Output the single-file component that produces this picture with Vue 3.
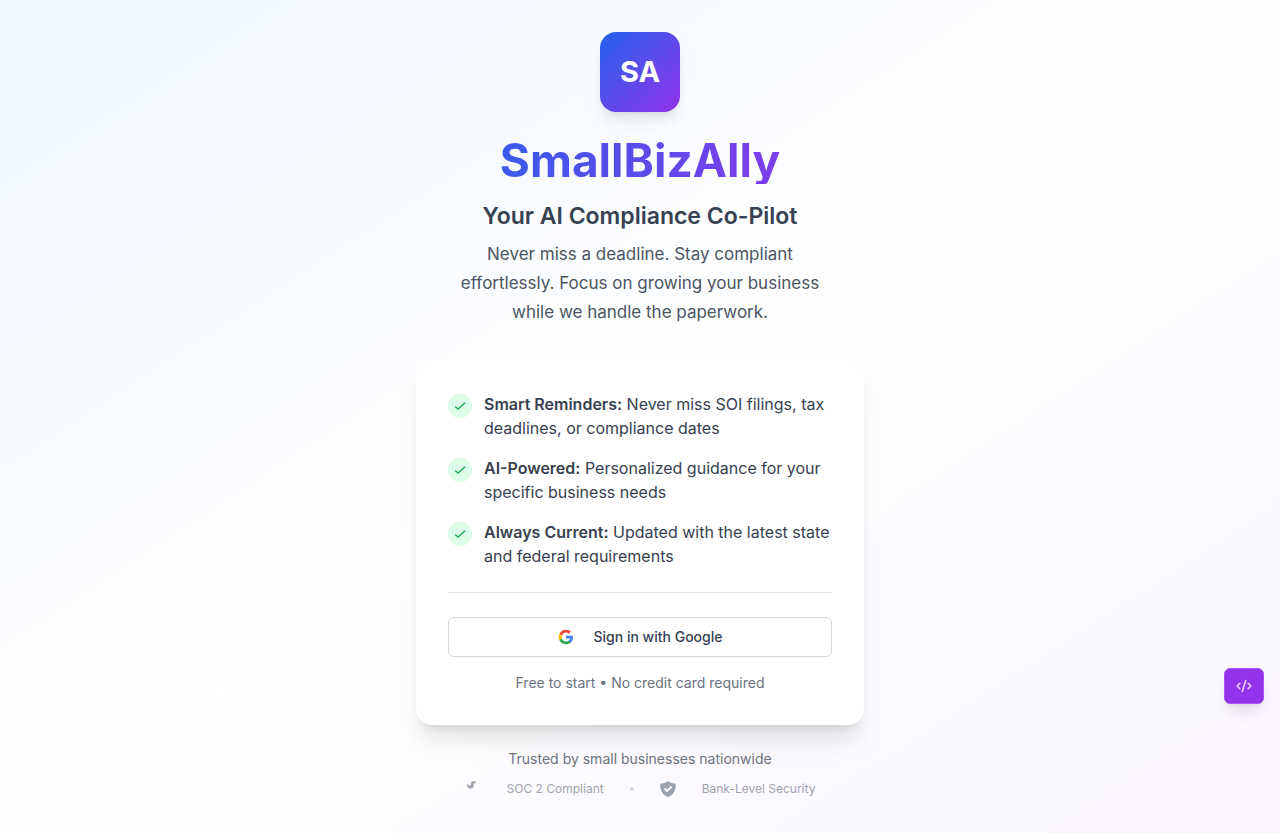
<script setup>
const features = [
  { title: 'Smart Reminders:', text: 'Never miss SOI filings, tax deadlines, or compliance dates' },
  { title: 'AI-Powered:', text: 'Personalized guidance for your specific business needs' },
  { title: 'Always Current:', text: 'Updated with the latest state and federal requirements' },
]
</script>

<template>
  <main class="page">
    <div class="column">
      <header class="hero">
        <div class="logo">SA</div>
        <h1>SmallBizAlly</h1>
        <h2>Your AI Compliance Co-Pilot</h2>
        <p class="lead">
          Never miss a deadline. Stay compliant effortlessly. Focus on growing your business while we handle the paperwork.
        </p>
      </header>

      <section class="card">
        <ul class="features">
          <li v-for="f in features" :key="f.title">
            <span class="tick">
              <svg width="16" height="16" viewBox="0 0 16 16" aria-hidden="true">
                <path d="M3.2 8.6 6.1 11.2 13 4.8" fill="none" stroke="currentColor" stroke-width="1.3" />
              </svg>
            </span>
            <p><strong>{{ f.title }}</strong> {{ f.text }}</p>
          </li>
        </ul>
        <div class="signin">
          <button type="button" class="google">
            <svg width="16" height="16" viewBox="0 0 24 24" aria-hidden="true">
              <path fill="#4285F4" d="M22.56 12.25c0-.78-.07-1.53-.2-2.25H12v4.26h5.92c-.26 1.37-1.04 2.53-2.21 3.31v2.77h3.57c2.08-1.92 3.28-4.74 3.28-8.09z" />
              <path fill="#34A853" d="M12 23c2.97 0 5.46-.98 7.28-2.66l-3.57-2.77c-.98.66-2.23 1.06-3.71 1.06-2.86 0-5.29-1.93-6.16-4.53H2.18v2.84C3.99 20.53 7.7 23 12 23z" />
              <path fill="#FBBC05" d="M5.84 14.09c-.22-.66-.35-1.36-.35-2.09s.13-1.43.35-2.09V7.07H2.18C1.43 8.55 1 10.22 1 12s.43 3.45 1.18 4.93l3.66-2.84z" />
              <path fill="#EA4335" d="M12 5.38c1.62 0 3.06.56 4.21 1.64l3.15-3.15C17.45 2.09 14.97 1 12 1 7.7 1 3.99 3.47 2.18 7.07l3.66 2.84c.87-2.6 3.3-4.53 6.16-4.53z" />
            </svg>
            <span>Sign in with Google</span>
          </button>
          <p class="note">Free to start • No credit card required</p>
        </div>
      </section>

      <footer class="trust">
        <p>Trusted by small businesses nationwide</p>
        <div class="badges">
          <svg width="16" height="16" viewBox="0 0 16 16" fill="currentColor" aria-hidden="true">
            <path d="M1.400 3.600 2.600 3.200 3.400 4.300 5.300 4.400 6.400 3.500 5.900 2.300 6.600 .600 10.600 .300 10.400 2.300 8.300 2.800 8.700 4.200 8.200 6.500 6.500 7.500 4 7.400 2.600 6.200 2.700 5.200z" />
          </svg>
          <span>SOC 2 Compliant</span>
          <i class="dot"></i>
          <svg width="16" height="16" viewBox="0 0 16 16" fill="currentColor" aria-hidden="true">
            <path fill-rule="evenodd" d="M8 0c-2 1.700-4.700 2.600-7.700 2.700C.1 8.500 1.600 13.700 8 16c6.400-2.300 7.900-7.500 7.700-13.300C12.700 2.600 10 1.700 8 0zm3.700 6.700-4 4a1 1 0 0 1-1.400 0l-2-2a1 1 0 0 1 1.400-1.400L7 8.600l3.300-3.300a1 1 0 0 1 1.400 1.400z" />
          </svg>
          <span>Bank-Level Security</span>
        </div>
      </footer>
    </div>

    <button type="button" class="code" aria-label="Code">
      <svg width="16" height="16" viewBox="0 0 16 16" fill="none" stroke="currentColor" stroke-width="1.700" stroke-linecap="round" stroke-linejoin="round" aria-hidden="true">
        <path d="M3.800 5.400 1.200 8l2.600 2.600M12.200 5.400 14.800 8l-2.600 2.600M9.700 2.600 6.300 13.400" />
      </svg>
    </button>
  </main>
</template>

<style>
body {
  margin: 0;
}
</style>

<style scoped>
.page {
  box-sizing: border-box;
  min-height: 100vh;
  padding: 32px 16px;
  display: flex;
  justify-content: center;
  background: linear-gradient(to bottom right, #eff6ff, #ffffff, #faf5ff);
  font-family: Inter, "Liberation Sans", sans-serif;
  font-size: 16px;
  line-height: 24px;
  color: #374151;
}
h1, h2, p, ul {
  margin: 0;
  padding: 0;
}
svg {
  display: block;
  flex-shrink: 0;
}
.column {
  width: 100%;
  max-width: 448px;
}
.hero {
  display: flex;
  flex-direction: column;
  align-items: center;
  text-align: center;
}
.logo {
  width: 80px;
  height: 80px;
  display: flex;
  align-items: center;
  justify-content: center;
  border-radius: 16px;
  background: linear-gradient(to bottom right, #2563eb, #9333ea);
  box-shadow: 0 10px 15px -3px rgba(0, 0, 0, 0.1), 0 4px 6px -4px rgba(0, 0, 0, 0.1);
  color: #fff;
  font-size: 29px;
  font-weight: 700;
}
h1 {
  align-self: stretch;
  margin-top: 24px;
  font-size: 46px;
  line-height: 48px;
  font-weight: 700;
  background: linear-gradient(to right, #2563eb, #9333ea);
  background-clip: text;
  -webkit-background-clip: text;
  color: transparent;
}
h2 {
  margin-top: 16px;
  font-size: 23px;
  line-height: 32px;
  font-weight: 600;
}
.lead {
  max-width: 384px;
  margin-top: 8px;
  font-size: 17px;
  line-height: 29px;
  color: #4b5563;
}
.card {
  margin-top: 33px;
  padding: 32px;
  border-radius: 16px;
  background: #fff;
  box-shadow: 0 20px 25px -5px rgba(0, 0, 0, 0.1), 0 8px 10px -6px rgba(0, 0, 0, 0.1);
}
.features {
  display: grid;
  gap: 16px;
  list-style: none;
}
.features li {
  display: flex;
  gap: 12px;
}
.features strong {
  font-weight: 600;
}
.tick {
  flex: none;
  width: 24px;
  height: 24px;
  margin-top: 2px;
  display: flex;
  align-items: center;
  justify-content: center;
  border-radius: 50%;
  background: #dcfce7;
  color: #16a34a;
}
.signin {
  margin-top: 24px;
  padding-top: 24px;
  border-top: 1px solid #dbe1ea;
}
.google {
  width: 100%;
  height: 40px;
  display: flex;
  align-items: center;
  justify-content: center;
  gap: 20px;
  border: 1px solid #d1d5db;
  border-radius: 6px;
  background: #fff;
  color: #374151;
  font: 500 14px/20px Inter, "Liberation Sans", sans-serif;
}
.note {
  margin-top: 16px;
  text-align: center;
  font-size: 14px;
  line-height: 20px;
  color: #6b7280;
}
.trust {
  margin-top: 24px;
  text-align: center;
  font-size: 14px;
  line-height: 20px;
  color: #6b7280;
}
.badges {
  margin-top: 12px;
  display: flex;
  align-items: center;
  justify-content: center;
  gap: 26px;
  font-size: 12px;
  line-height: 16px;
  color: #9ca3af;
}
.dot {
  width: 4px;
  height: 4px;
  border-radius: 50%;
  background: #d1d5db;
}
.code {
  position: fixed;
  right: 16px;
  bottom: 129px;
  width: 40px;
  height: 36px;
  padding: 0;
  display: flex;
  align-items: center;
  justify-content: center;
  border: 1px solid #a855f7;
  border-radius: 6px;
  background: #9333ea;
  color: #e4c9fa;
  box-shadow: 0 10px 15px -3px rgba(0, 0, 0, 0.1), 0 4px 6px -4px rgba(0, 0, 0, 0.1);
}
</style>
